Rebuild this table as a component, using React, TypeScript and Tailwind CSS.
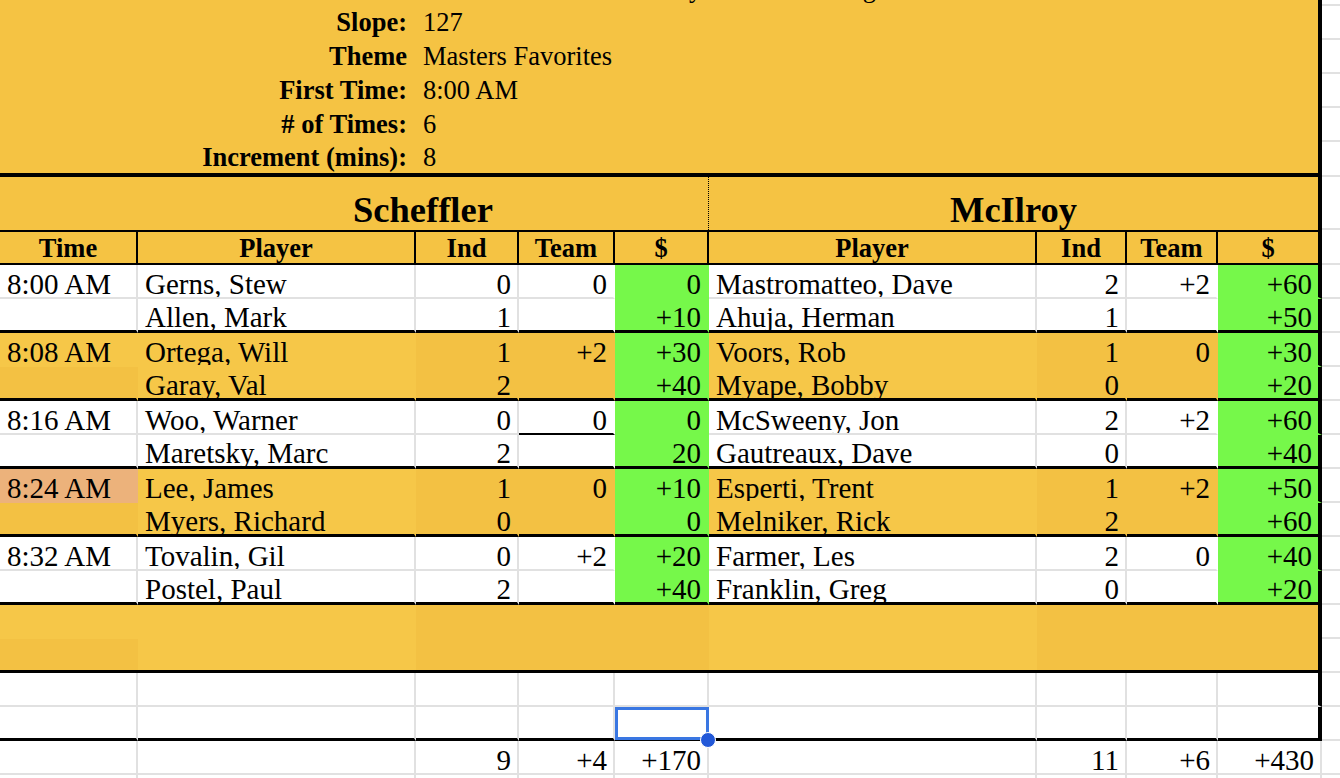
import React from "react";

const W = {
  A: "w-[138px]",
  B: "w-[278px]",
  C: "w-[103px]",
  D: "w-[96px]",
  E: "w-[94px]",
  F: "w-[328px]",
  G: "w-[90px]",
  H: "w-[91px]",
  I: "w-[104px]",
  J: "w-[18px]",
};

const Y = "bg-[#f5c343]";
const YL = "bg-[#f6c748]";
const YD = "bg-[#f3c143]";
const GR = "bg-[#76f84a]";
const OR = "bg-[#ecb27b]";

const DT = "text-[29px] leading-[25px]";
const L = "pl-[7px]";
const R = "justify-end pr-[6px]";

function Cell({ className, children }: { className: string; children?: React.ReactNode }) {
  return (
    <div className={"shrink-0 flex items-end overflow-hidden whitespace-nowrap " + className}>
      {children}
    </div>
  );
}

function JCell() {
  return <Cell className={W.J + " bg-white border-b-2 border-b-[#e1e1e1]"} />;
}

function Info({ label, value, last }: { label: string; value: string; last?: boolean }) {
  const h = last ? "h-[35px]" : "h-[34px]";
  const bb = last ? " border-b-4 border-b-black leading-[32px]" : " leading-[35px]";
  return (
    <div className={"flex " + h}>
      <Cell className={"w-[416px] " + Y + " justify-end pr-[9px] font-bold text-[26.5px]" + bb}>{label}</Cell>
      <Cell className={"w-[906px] " + Y + " pl-[7px] text-[26.5px] border-r-4 border-r-black" + bb}>{value}</Cell>
      <JCell />
    </div>
  );
}

type P = { name: string; ind: string; team: string; dol: string };

function Pair({
  y,
  time,
  orange,
  l,
  r,
  underline,
}: {
  y: boolean;
  time: string;
  orange?: boolean;
  l: [P, P];
  r: [P, P];
  underline?: boolean;
}) {
  return (
    <>
      {[0, 1].map((i) => {
        const last = i === 1;
        const bb = last
          ? " border-b-[3px] border-b-black"
          : y
          ? " border-b-2 border-b-transparent"
          : " border-b-2 border-b-[#e1e1e1]";
        const gbb = last ? " border-b-[3px] border-b-black" : " border-b-2 border-b-transparent";
        const br = y ? " border-r-2 border-r-transparent" : " border-r-2 border-r-[#e1e1e1]";
        const light = y ? YL : "bg-white";
        const dark = y ? YD : "bg-white";
        const aBg = i === 0 ? (orange ? OR : light) : dark;
        const teamBB = underline && i === 0 ? " border-b-2 border-b-black" : bb;
        const lp = l[i];
        const rp = r[i];
        return (
          <div key={i} className="flex h-[34px]">
            <Cell className={W.A + " " + aBg + br + bb + " " + DT + " " + L}>{i === 0 ? time : ""}</Cell>
            <Cell className={W.B + " " + light + br + bb + " " + DT + " " + L}>{lp.name}</Cell>
            <Cell className={W.C + " " + dark + br + bb + " " + DT + " " + R}>{lp.ind}</Cell>
            <Cell className={W.D + " " + dark + " border-r-2 border-r-transparent" + teamBB + " " + DT + " " + R}>{lp.team}</Cell>
            <Cell className={W.E + " " + GR + " border-r-2 border-r-transparent" + gbb + " " + DT + " " + R}>{lp.dol}</Cell>
            <Cell className={W.F + " " + light + br + bb + " " + DT + " " + L}>{rp.name}</Cell>
            <Cell className={W.G + " " + dark + br + bb + " " + DT + " " + R}>{rp.ind}</Cell>
            <Cell className={W.H + " " + dark + " border-r-2 border-r-transparent" + bb + " " + DT + " " + R}>{rp.team}</Cell>
            <Cell className={W.I + " " + GR + " border-r-4 border-r-black" + gbb + " " + DT + " " + R}>{rp.dol}</Cell>
            <JCell />
          </div>
        );
      })}
    </>
  );
}

const p = (name: string, ind: string, team: string, dol: string): P => ({ name, ind, team, dol });

export default function App() {
  const gw = " bg-white border-r-2 border-r-[#e1e1e1] border-b-2 border-b-[#e1e1e1]";
  const gw2 = " bg-white border-r-2 border-r-[#e1e1e1] border-b-[3px] border-b-black";
  const hd = " " + Y + " border-r-2 border-r-black justify-center font-bold text-[26.5px] leading-[30px] border-b-2 border-b-black";
  return (
    <div className="w-[1340px] h-[778px] overflow-hidden bg-white text-black font-['Liberation_Serif','Times_New_Roman',serif]">
      {/* partially visible top row */}
      <div className="h-[6px] overflow-hidden">
        <div className="flex h-[34px] -mt-[28px]">
          <Cell className={"w-[416px] " + Y} />
          <Cell className={"w-[906px] " + Y + " pl-[7px] text-[26.5px] leading-[35px] border-r-4 border-r-black"}>
            Scores Were Final Sunday Before Evening
          </Cell>
          <JCell />
        </div>
      </div>

      <Info label="Slope:" value="127" />
      <Info label="Theme" value="Masters Favorites" />
      <Info label="First Time:" value="8:00 AM" />
      <Info label="# of Times:" value="6" />
      <Info label="Increment (mins):" value="8" last />

      {/* team row */}
      <div className="flex h-[53px]">
        <Cell className={W.A + " " + Y} />
        <Cell className={"w-[571px] " + Y + " border-r border-dotted border-r-black justify-center font-bold text-[36.5px] leading-[41px]"}>
          Scheffler
        </Cell>
        <Cell className={"w-[613px] " + Y + " border-r-4 border-r-black justify-center font-bold text-[36.5px] leading-[41px]"}>
          McIlroy
        </Cell>
        <JCell />
      </div>
      <div className="flex h-[2px]">
        <div className="w-[1322px] bg-black" />
        <div className="w-[18px] bg-white" />
      </div>

      {/* header row */}
      <div className="flex h-[33px]">
        <Cell className={W.A + hd}>Time</Cell>
        <Cell className={W.B + hd}>Player</Cell>
        <Cell className={W.C + hd}>Ind</Cell>
        <Cell className={W.D + hd}>Team</Cell>
        <Cell className={W.E + hd}>$</Cell>
        <Cell className={W.F + hd}>Player</Cell>
        <Cell className={W.G + hd}>Ind</Cell>
        <Cell className={W.H + hd}>Team</Cell>
        <Cell className={W.I + " " + Y + " border-r-4 border-r-black justify-center font-bold text-[26.5px] leading-[30px] border-b-2 border-b-black"}>$</Cell>
        <JCell />
      </div>

      <Pair
        y={false}
        time="8:00 AM"
        l={[p("Gerns, Stew", "0", "0", "0"), p("Allen, Mark", "1", "", "+10")]}
        r={[p("Mastromatteo, Dave", "2", "+2", "+60"), p("Ahuja, Herman", "1", "", "+50")]}
      />
      <Pair
        y={true}
        time="8:08 AM"
        l={[p("Ortega, Will", "1", "+2", "+30"), p("Garay, Val", "2", "", "+40")]}
        r={[p("Voors, Rob", "1", "0", "+30"), p("Myape, Bobby", "0", "", "+20")]}
      />
      <Pair
        y={false}
        time="8:16 AM"
        underline
        l={[p("Woo, Warner", "0", "0", "0"), p("Maretsky, Marc", "2", "", "20")]}
        r={[p("McSweeny, Jon", "2", "+2", "+60"), p("Gautreaux, Dave", "0", "", "+40")]}
      />
      <Pair
        y={true}
        orange
        time="8:24 AM"
        l={[p("Lee, James", "1", "0", "+10"), p("Myers, Richard", "0", "", "0")]}
        r={[p("Esperti, Trent", "1", "+2", "+50"), p("Melniker, Rick", "2", "", "+60")]}
      />
      <Pair
        y={false}
        time="8:32 AM"
        l={[p("Tovalin, Gil", "0", "+2", "+20"), p("Postel, Paul", "2", "", "+40")]}
        r={[p("Farmer, Les", "2", "0", "+40"), p("Franklin, Greg", "0", "", "+20")]}
      />

      {/* empty yellow block */}
      <div className="flex h-[34px]">
        <Cell className={W.A + " " + YL} />
        <Cell className={W.B + " " + YL} />
        <Cell className={W.C + " " + YD} />
        <Cell className={W.D + " " + YD} />
        <Cell className={W.E + " " + YD} />
        <Cell className={W.F + " " + YL} />
        <Cell className={W.G + " " + YD} />
        <Cell className={W.H + " " + YD} />
        <Cell className={W.I + " " + YD + " border-r-4 border-r-black"} />
        <JCell />
      </div>
      <div className="flex h-[34px]">
        <Cell className={W.A + " " + YD + " border-b-[3px] border-b-black"} />
        <Cell className={W.B + " " + YL + " border-b-[3px] border-b-black"} />
        <Cell className={W.C + " " + YD + " border-b-[3px] border-b-black"} />
        <Cell className={W.D + " " + YD + " border-b-[3px] border-b-black"} />
        <Cell className={W.E + " " + YD + " border-b-[3px] border-b-black"} />
        <Cell className={W.F + " " + YL + " border-b-[3px] border-b-black"} />
        <Cell className={W.G + " " + YD + " border-b-[3px] border-b-black"} />
        <Cell className={W.H + " " + YD + " border-b-[3px] border-b-black"} />
        <Cell className={W.I + " " + YD + " border-r-4 border-r-black border-b-[3px] border-b-black"} />
        <JCell />
      </div>

      {/* white empty rows */}
      <div className="flex h-[34px]">
        <Cell className={W.A + gw} />
        <Cell className={W.B + gw} />
        <Cell className={W.C + gw} />
        <Cell className={W.D + gw} />
        <Cell className={W.E + gw} />
        <Cell className={W.F + gw} />
        <Cell className={W.G + gw} />
        <Cell className={W.H + gw} />
        <Cell className={W.I + " bg-white border-r-4 border-r-black border-b-2 border-b-[#e1e1e1]"} />
        <JCell />
      </div>
      <div className="flex h-[34px]">
        <Cell className={W.A + gw2} />
        <Cell className={W.B + gw2} />
        <Cell className={W.C + gw2} />
        <Cell className={W.D + gw2} />
        <div className={"relative shrink-0 " + W.E + gw2}>
          <div className="absolute left-0 top-0 -right-[2px] -bottom-[2px] border-[3px] border-[#3a77e2]" />
          <div className="absolute left-[85px] top-[25px] w-[16px] h-[16px] rounded-full bg-[#2258d8] border border-white" />
        </div>
        <Cell className={W.F + gw2} />
        <Cell className={W.G + gw2} />
        <Cell className={W.H + gw2} />
        <Cell className={W.I + " bg-white border-r-4 border-r-black border-b-[3px] border-b-black"} />
        <JCell />
      </div>

      {/* totals */}
      <div className="flex h-[34px]">
        <Cell className={W.A + gw} />
        <Cell className={W.B + gw} />
        <Cell className={W.C + gw + " " + DT + " " + R}>9</Cell>
        <Cell className={W.D + gw + " " + DT + " " + R}>+4</Cell>
        <Cell className={W.E + gw + " " + DT + " " + R}>+170</Cell>
        <Cell className={W.F + gw} />
        <Cell className={W.G + gw + " " + DT + " " + R}>11</Cell>
        <Cell className={W.H + gw + " " + DT + " " + R}>+6</Cell>
        <Cell className={W.I + gw + " " + DT + " " + R}>+430</Cell>
        <JCell />
      </div>
      <div className="flex h-[34px]">
        <Cell className={W.A + gw} />
        <Cell className={W.B + gw} />
        <Cell className={W.C + gw} />
        <Cell className={W.D + gw} />
        <Cell className={W.E + gw} />
        <Cell className={W.F + gw} />
        <Cell className={W.G + gw} />
        <Cell className={W.H + gw} />
        <Cell className={W.I + gw} />
        <JCell />
      </div>
    </div>
  );
}
